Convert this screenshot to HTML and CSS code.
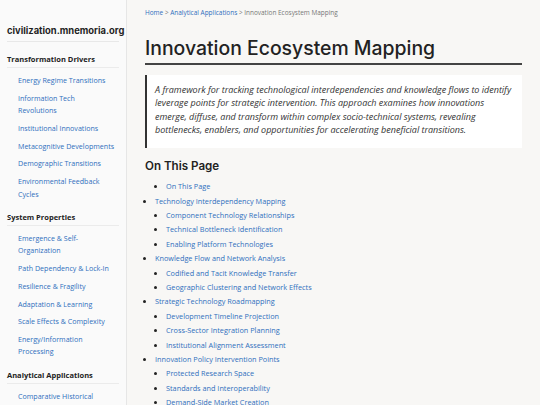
FILE: index.html
```
<!DOCTYPE html>
<html lang="en">
<head>
<meta charset="utf-8">
<title>Innovation Ecosystem Mapping</title>
<link rel="stylesheet" href="styles.css">
</head>
<body>
<aside class="sidebar">
  <div class="logo">civilization.mnemoria.org</div>
  <div class="group">
    <div class="group-title">Transformation Drivers</div>
    <ul class="nav">
      <li><a href="#">Energy Regime Transitions</a></li>
      <li><a href="#">Information Tech Revolutions</a></li>
      <li><a href="#">Institutional Innovations</a></li>
      <li><a href="#">Metacognitive Developments</a></li>
      <li><a href="#">Demographic Transitions</a></li>
      <li><a href="#">Environmental Feedback Cycles</a></li>
    </ul>
  </div>
  <div class="group">
    <div class="group-title">System Properties</div>
    <ul class="nav">
      <li><a href="#">Emergence &amp; Self-Organization</a></li>
      <li><a href="#">Path Dependency &amp; Lock-In</a></li>
      <li><a href="#">Resilience &amp; Fragility</a></li>
      <li><a href="#">Adaptation &amp; Learning</a></li>
      <li><a href="#">Scale Effects &amp; Complexity</a></li>
      <li><a href="#">Energy/Information Processing</a></li>
    </ul>
  </div>
  <div class="group">
    <div class="group-title">Analytical Applications</div>
    <ul class="nav">
      <li><a href="#">Comparative Historical Analysis</a></li>
      <li><a href="#">Innovation Ecosystem Mapping</a></li>
    </ul>
  </div>
</aside>
<main class="main">
  <div class="breadcrumb"><a href="#">Home</a> &gt; <a href="#">Analytical Applications</a> &gt; Innovation Ecosystem Mapping</div>
  <h1 class="title">Innovation Ecosystem Mapping</h1>
  <blockquote class="summary">
    <p>A framework for tracking technological interdependencies and knowledge flows to identify leverage points for strategic intervention. This approach examines how innovations emerge, diffuse, and transform within complex socio-technical systems, revealing bottlenecks, enablers, and opportunities for accelerating beneficial transitions.</p>
  </blockquote>
  <h2 class="toc-title">On This Page</h2>
  <ul class="toc">
    <ul class="toc-sub">
      <li><a href="#">On This Page</a></li>
    </ul>
    <li><a href="#">Technology Interdependency Mapping</a>
      <ul class="toc-sub">
        <li><a href="#">Component Technology Relationships</a></li>
        <li><a href="#">Technical Bottleneck Identification</a></li>
        <li><a href="#">Enabling Platform Technologies</a></li>
      </ul>
    </li>
    <li><a href="#">Knowledge Flow and Network Analysis</a>
      <ul class="toc-sub">
        <li><a href="#">Codified and Tacit Knowledge Transfer</a></li>
        <li><a href="#">Geographic Clustering and Network Effects</a></li>
      </ul>
    </li>
    <li><a href="#">Strategic Technology Roadmapping</a>
      <ul class="toc-sub">
        <li><a href="#">Development Timeline Projection</a></li>
        <li><a href="#">Cross-Sector Integration Planning</a></li>
        <li><a href="#">Institutional Alignment Assessment</a></li>
      </ul>
    </li>
    <li><a href="#">Innovation Policy Intervention Points</a>
      <ul class="toc-sub">
        <li><a href="#">Protected Research Space</a></li>
        <li><a href="#">Standards and Interoperability</a></li>
        <li><a href="#">Demand-Side Market Creation</a></li>
      </ul>
    </li>
  </ul>
</main>
</body>
</html>
```
FILE: styles.css
```
html, body {
  margin: 0;
  padding: 0;
  height: 100%;
  overflow: hidden;
}
body {
  display: flex;
  background: #f8f7f5;
  font-family: "Open Sans", "Liberation Sans", sans-serif;
  color: #222;
}
a {
  color: #2f6fbd;
  text-decoration: none;
}
.sidebar {
  width: 112px;
  flex: none;
  height: 100vh;
  background: #fafafa;
  border-right: 1px solid #e6e6e6;
  padding: 23px 7px 0 7px;
}
.logo {
  font-family: Inter, "Open Sans", sans-serif;
  font-weight: 700;
  font-size: 9.4px;
  line-height: 16px;
  color: #1f1f1f;
  white-space: nowrap;
  padding-bottom: 2px;
  border-bottom: 1px solid #e8e8e8;
  margin-bottom: 11px;
}
.group-title {
  font-size: 7.5px;
  font-weight: 700;
  line-height: 12px;
  color: #222;
  padding-bottom: 2px;
  border-bottom: 1px solid #ebebeb;
  margin-bottom: 6px;
}
.nav {
  list-style: none;
  margin: 0 0 11px 0;
  padding: 0 4px 0 11px;
}
.nav li {
  font-size: 7.1px;
  line-height: 12.3px;
  margin-bottom: 5.5px;
}
.main {
  flex: 1;
  padding: 8px 18px 0 18px;
  min-width: 0;
}
.breadcrumb {
  font-size: 6.45px;
  line-height: 10px;
  color: #777;
}
.title {
  font-family: Inter, "Open Sans", sans-serif;
  font-weight: 500;
  font-size: 19.4px;
  line-height: 24px;
  color: #222;
  margin: 18px 0 0 0;
  padding-bottom: 3px;
  border-bottom: 2px solid #444;
}
.summary {
  margin: 10px 0 0 0;
  background: #fff;
  border-left: 2px solid #333;
  padding: 8px 4px 12px 8px;
}
.summary p {
  margin: 0;
  font-style: italic;
  font-size: 9px;
  line-height: 13.3px;
  color: #333;
}
.toc-title {
  font-family: Inter, "Open Sans", sans-serif;
  font-weight: 600;
  font-size: 11.6px;
  line-height: 16px;
  margin: 10px 0 5px 0;
  color: #222;
}
.toc {
  list-style: disc;
  margin: 0;
  padding-left: 10px;
}
.toc li {
  font-size: 7.3px;
  line-height: 14.4px;
}
.toc-sub {
  list-style: disc;
  margin: 0;
  padding-left: 11px;
}
```
